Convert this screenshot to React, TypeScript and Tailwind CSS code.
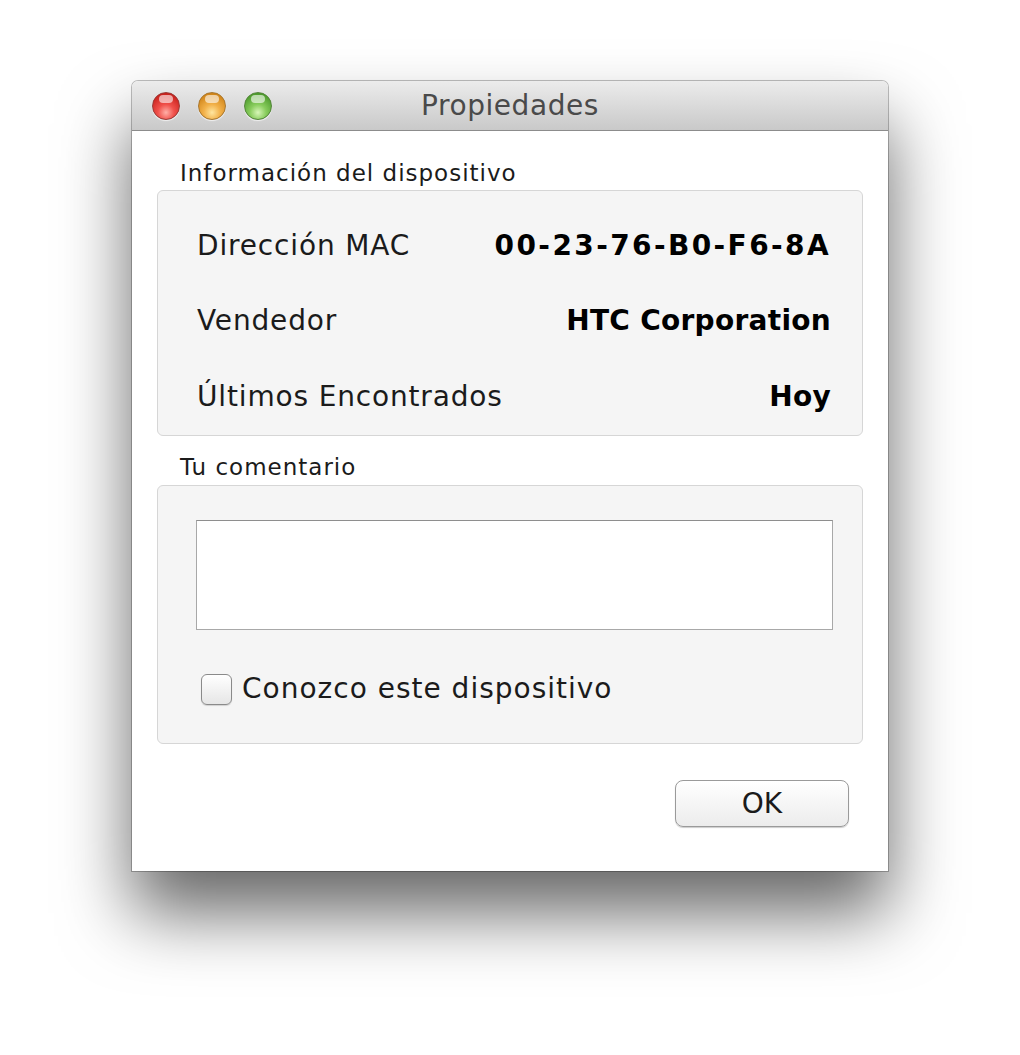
import React from 'react';

const font = { fontFamily: '"DejaVu Sans", "Noto Sans", sans-serif' };

function Light({ tone }: { tone: 'red' | 'orange' | 'green' }) {
  const cls =
    tone === 'red'
      ? 'bg-[radial-gradient(circle_at_50%_75%,#ffb0a8_0%,#f0504a_35%,#c8201c_80%)] border-[#9a3a36]'
      : tone === 'orange'
        ? 'bg-[radial-gradient(circle_at_50%_75%,#ffe6a0_0%,#f2b14a_35%,#d08418_80%)] border-[#a9772e]'
        : 'bg-[radial-gradient(circle_at_50%_75%,#d8f6b8_0%,#88cc5c_35%,#4c9a2c_80%)] border-[#54863a]';
  return (
    <div className={`relative w-[28px] h-[28px] rounded-full border ${cls} shadow-[0_1px_1px_rgba(255,255,255,0.7)]`}>
      <div className="absolute left-[6px] top-[2px] w-[14px] h-[8px] rounded-full bg-white/60" />
    </div>
  );
}

function Row({ label, value, wide }: { label: string; value: string; wide?: boolean }) {
  return (
    <div className="flex items-center justify-between h-[75.5px]">
      <span className="text-[28px] tracking-[0.03em] text-[#1b1b1b]">{label}</span>
      <span className={`text-[28px] font-bold text-black ${wide ? 'tracking-[2.4px]' : 'tracking-[0.01em]'}`}>
        {value}
      </span>
    </div>
  );
}

export default function App() {
  return (
    <div className="w-[1020px] h-[1055px] bg-white pt-[81px] pl-[132px]" style={font}>
      <div className="w-[756px] h-[790px] bg-white rounded-t-[6px] shadow-[0_42px_70px_rgba(0,0,0,0.6),0_0_0_1px_rgba(0,0,0,0.25)] flex flex-col">
        <div className="relative h-[50px] rounded-t-[6px] bg-gradient-to-b from-[#ececec] to-[#c9c9c9] border-b border-[#8c8c8c] flex items-center">
          <div className="flex items-center gap-[18px] pl-[20px]">
            <Light tone="red" />
            <Light tone="orange" />
            <Light tone="green" />
          </div>
          <div className="absolute inset-0 flex items-center justify-center text-[28px] tracking-[0.02em] text-[#4a4a4a]">
            Propiedades
          </div>
        </div>

        <div className="flex flex-col px-[25px] pt-[28px]">
          <div className="pl-[23px] text-[23px] tracking-[1px] leading-[28px] text-[#1b1b1b] mb-[3px]">
            Información del dispositivo
          </div>
          <div className="h-[246px] bg-[#f5f5f5] border border-[#d6d6d6] rounded-[6px] pl-[39px] pr-[31px] pt-[17px]">
            <Row label="Dirección MAC" value="00-23-76-B0-F6-8A" wide />
            <Row label="Vendedor" value="HTC Corporation" />
            <Row label="Últimos Encontrados" value="Hoy" />
          </div>

          <div className="pl-[23px] mt-[17px] text-[23px] tracking-[1px] leading-[28px] text-[#1b1b1b] mb-[4px]">
            Tu comentario
          </div>
          <div className="h-[259px] bg-[#f5f5f5] border border-[#d6d6d6] rounded-[6px] px-[38px] pt-[34px]">
            <div className="w-[637px] h-[110px] bg-white border border-[#a8a8a8] border-t-[#8e8e8e]" />
            <label className="flex items-center gap-[10px] mt-[38px] pl-[5px]">
              <span className="w-[31px] h-[31px] rounded-[6px] border border-[#8a8a8a] bg-gradient-to-b from-[#ffffff] to-[#e6e6e6] shadow-[0_1px_1px_rgba(0,0,0,0.15)]" />
              <span className="text-[28px] tracking-[1px] text-[#1b1b1b]">Conozco este dispositivo</span>
            </label>
          </div>

          <div className="flex justify-end mt-[36px] pr-[14px]">
            <button className="w-[174px] h-[47px] rounded-[8px] border border-[#9a9a9a] bg-gradient-to-b from-[#ffffff] to-[#ececec] shadow-[0_1px_1px_rgba(0,0,0,0.2)] text-[28px] text-[#1b1b1b]">
              OK
            </button>
          </div>
        </div>
      </div>
    </div>
  );
}
